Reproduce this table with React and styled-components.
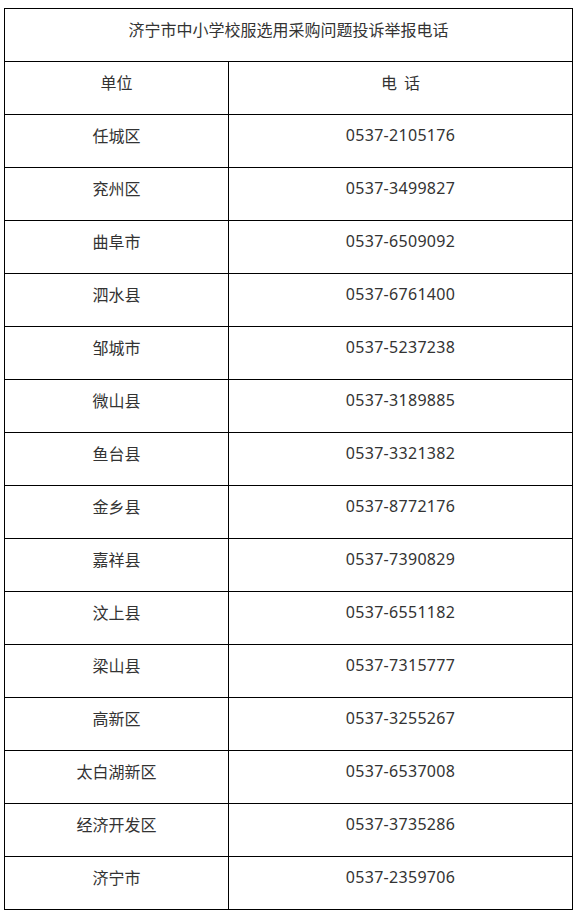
import React from "react";
import styled, { createGlobalStyle } from "styled-components";

const GlobalStyle = createGlobalStyle`
  body {
    margin: 0;
    background: #fff;
    font-family: "Noto Sans", "Noto Sans CJK SC", sans-serif;
    color: #333;
  }
`;

const Page = styled.div`
  padding: 8px 4px;
`;

const Table = styled.table`
  width: 569px;
  border-collapse: collapse;
  table-layout: fixed;
  font-size: 16px;

  td {
    border: 1px solid #000;
    height: 40px;
    padding: 0 0 12px;
    text-align: center;
    vertical-align: middle;
  }
`;

const TitleCell = styled.td`
  && {
    height: 40px;
  }
  font-family: "Noto Sans CJK SC", sans-serif;
`;

const Name = styled.td`
  font-family: "Noto Sans CJK SC", sans-serif;
`;

const Phone = styled.td`
  font-family: ${(p) => (p.$cjk ? '"Noto Sans CJK SC", sans-serif' : '"Noto Sans", sans-serif')};
  letter-spacing: ${(p) => (p.$cjk ? "0" : "0.3px")};
`;

const rows = [
  ["任城区", "0537-2105176"],
  ["兖州区", "0537-3499827"],
  ["曲阜市", "0537-6509092"],
  ["泗水县", "0537-6761400"],
  ["邹城市", "0537-5237238"],
  ["微山县", "0537-3189885"],
  ["鱼台县", "0537-3321382"],
  ["金乡县", "0537-8772176"],
  ["嘉祥县", "0537-7390829"],
  ["汶上县", "0537-6551182"],
  ["梁山县", "0537-7315777"],
  ["高新区", "0537-3255267"],
  ["太白湖新区", "0537-6537008"],
  ["经济开发区", "0537-3735286"],
  ["济宁市", "0537-2359706"],
];

export default function App() {
  return (
    <Page>
      <GlobalStyle />
      <Table>
        <colgroup>
          <col style={{ width: 224 }} />
          <col />
        </colgroup>
        <tbody>
          <tr>
            <TitleCell colSpan={2}>济宁市中小学校服选用采购问题投诉举报电话</TitleCell>
          </tr>
          <tr>
            <Name>单位</Name>
            <Phone $cjk>电&nbsp;&nbsp;话</Phone>
          </tr>
          {rows.map(([name, tel]) => (
            <tr key={name}>
              <Name>{name}</Name>
              <Phone>{tel}</Phone>
            </tr>
          ))}
        </tbody>
      </Table>
    </Page>
  );
}
